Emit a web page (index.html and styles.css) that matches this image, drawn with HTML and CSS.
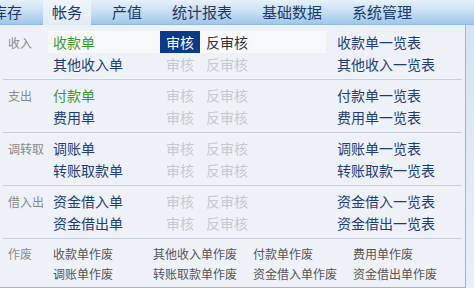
FILE: index.html
```html
<!DOCTYPE html>
<html lang="zh-CN">

<head>
    <meta charset="UTF-8">
    <title>帐务</title>
    <link rel="stylesheet" href="styles.css">
</head>

<body>
    <!-- Top menu -->
    <header class="topnav">
        <a class="tab">库存</a>
        <a class="tab active">帐务</a>
        <a class="tab">产值</a>
        <a class="tab">统计报表</a>
        <a class="tab">基础数据</a>
        <a class="tab">系统管理</a>
    </header>

    <div class="stage">
        <!-- Dropdown panel -->
        <div class="panel">
            <div class="group">
                <div class="row">
                    <span class="lbl">收入</span>
                    <div class="main hover">
                        <a class="item green">收款单</a>
                        <span class="op on">审核</span>
                        <span class="op dark">反审核</span>
                    </div>
                    <a class="list">收款单一览表</a>
                </div>
                <div class="row">
                    <span class="lbl"></span>
                    <div class="main">
                        <a class="item">其他收入单</a>
                        <span class="op">审核</span>
                        <span class="op">反审核</span>
                    </div>
                    <a class="list">其他收入一览表</a>
                </div>
            </div>

            <div class="group">
                <div class="row">
                    <span class="lbl">支出</span>
                    <div class="main">
                        <a class="item green">付款单</a>
                        <span class="op">审核</span>
                        <span class="op">反审核</span>
                    </div>
                    <a class="list">付款单一览表</a>
                </div>
                <div class="row">
                    <span class="lbl"></span>
                    <div class="main">
                        <a class="item">费用单</a>
                        <span class="op">审核</span>
                        <span class="op">反审核</span>
                    </div>
                    <a class="list">费用单一览表</a>
                </div>
            </div>

            <div class="group">
                <div class="row">
                    <span class="lbl">调转取</span>
                    <div class="main">
                        <a class="item">调账单</a>
                        <span class="op">审核</span>
                        <span class="op">反审核</span>
                    </div>
                    <a class="list">调账单一览表</a>
                </div>
                <div class="row">
                    <span class="lbl"></span>
                    <div class="main">
                        <a class="item">转账取款单</a>
                        <span class="op">审核</span>
                        <span class="op">反审核</span>
                    </div>
                    <a class="list">转账取款一览表</a>
                </div>
            </div>

            <div class="group">
                <div class="row">
                    <span class="lbl">借入出</span>
                    <div class="main">
                        <a class="item">资金借入单</a>
                        <span class="op">审核</span>
                        <span class="op">反审核</span>
                    </div>
                    <a class="list">资金借入一览表</a>
                </div>
                <div class="row">
                    <span class="lbl"></span>
                    <div class="main">
                        <a class="item">资金借出单</a>
                        <span class="op">审核</span>
                        <span class="op">反审核</span>
                    </div>
                    <a class="list">资金借出一览表</a>
                </div>
            </div>

            <!-- Void documents -->
            <div class="group last">
                <div class="row small">
                    <span class="lbl">作废</span>
                    <a class="void">收款单作废</a>
                    <a class="void">其他收入单作废</a>
                    <a class="void">付款单作废</a>
                    <a class="void">费用单作废</a>
                </div>
                <div class="row small">
                    <span class="lbl"></span>
                    <a class="void">调账单作废</a>
                    <a class="void">转账取款单作废</a>
                    <a class="void">资金借入单作废</a>
                    <a class="void">资金借出单作废</a>
                </div>
            </div>
        </div>
        <div class="side"></div>
    </div>
</body>

</html>
```

FILE: styles.css
```css
/* General */
body {
    margin: 0;
    width: 474px;
    height: 292px;
    overflow: hidden;
    background-color: #fff;
    font-family: "Noto Sans CJK SC", "Microsoft YaHei", sans-serif;
    font-size: 14px;
}

a {
    text-decoration: none;
    cursor: pointer;
}

/* Top menu */
.topnav {
    display: flex;
    gap: 12px;
    height: 25px;
    margin-left: -17px;
    background: linear-gradient(#e6f1fb, #c3dcf2 55%, #9fc6ea);
    border-bottom: 1px solid #8db9e2;
    box-sizing: border-box;
}

.topnav .tab {
    padding: 0 9px;
    line-height: 24px;
    font-size: 15px;
    color: #1d3a66;
}

.topnav .tab.active {
    background: linear-gradient(#f0f5fb, #e1ebf5);
    height: 25px;
}

/* Dropdown */
.stage {
    display: flex;
    height: 263px;
}

.panel {
    width: 466px;
    padding-top: 2px;
    background-color: #eef2f8;
    border-right: 1px solid #a9b1bd;
    border-bottom: 1px solid #a9b1bd;
    box-sizing: border-box;
}

.side {
    width: 8px;
    height: 263px;
    background: linear-gradient(#d4e4f3, #e8f0f8);
}

.group {
    padding: 4px 0;
    margin: 0 3px;
    border-bottom: 1px solid #c9cfd8;
}

.group.last {
    border-bottom: none;
}

.row {
    display: flex;
    align-items: center;
    height: 22px;
    margin-left: -3px;
}

.row.small {
    height: 20px;
    font-size: 12px;
}

.lbl {
    width: 48px;
    padding-left: 8px;
    box-sizing: border-box;
    font-size: 12px;
    color: #8a8a8a;
}

.row.small .lbl {
    width: 53px;
}

.main {
    display: flex;
    align-items: center;
    width: 278px;
    height: 22px;
    padding-left: 5px;
    box-sizing: border-box;
}

.main.hover {
    background-color: #f7f9fc;
}

.item {
    width: 107px;
    color: #1e3d78;
}

.item.green {
    color: #3f9a2e;
}

.op {
    padding: 0 6px;
    height: 22px;
    line-height: 22px;
    color: #c5c9d1;
}

.op.on {
    background-color: #0c3a8a;
    color: #fff;
}

.op.dark {
    color: #333;
}

.list {
    margin-left: 11px;
    color: #1e3d78;
}

.void {
    width: 100px;
    color: #555;
}
```
